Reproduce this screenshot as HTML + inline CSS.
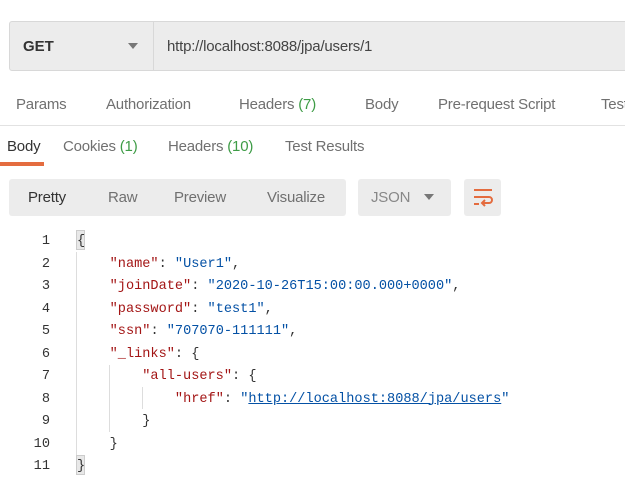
<!DOCTYPE html>
<html><head><style>
*{margin:0;padding:0;box-sizing:border-box}
body{width:625px;height:500px;background:#fff;font-family:"Liberation Sans",sans-serif;position:relative;overflow:hidden;color:#505050}
.abs{position:absolute;white-space:nowrap}
.url{left:9px;top:21px;width:640px;height:50px;background:#ececec;border:1px solid #d8d8d8;border-radius:3px}
.sep{left:153px;top:22px;width:1px;height:48px;background:#d8d8d8}
.t{font-size:15px;color:#707070;letter-spacing:-0.2px}
.g{color:#3e9c46}
.btn{background:#ececec;border-radius:3px;height:37px;top:179px}
.code{font-family:"Liberation Mono",monospace;font-size:13.6px;white-space:pre}
.ln{width:50px;text-align:right;color:#333;font-size:13.6px;font-family:"Liberation Mono",monospace}
.k{color:#a31515}.s{color:#0451a5}
</style></head><body>
<div class="abs url"></div>
<div class="abs sep"></div>
<div class="abs" style="left:23px;top:38px;font-size:15px;color:#333;font-weight:bold">GET</div>
<svg class="abs" style="left:128px;top:43px" width="10" height="6"><path d="M0 0H10L5 6Z" fill="#777"/></svg>
<div class="abs" style="left:167px;top:38px;font-size:15px;color:#444;letter-spacing:-0.2px">http://localhost:8088/jpa/users/1</div>

<div class="abs t" style="left:16px;top:96px">Params</div>
<div class="abs t" style="left:106px;top:96px">Authorization</div>
<div class="abs t" style="left:239px;top:96px">Headers <span class="g">(7)</span></div>
<div class="abs t" style="left:365px;top:96px">Body</div>
<div class="abs t" style="left:438px;top:96px">Pre-request Script</div>
<div class="abs t" style="left:601px;top:96px">Test</div>
<div class="abs" style="left:0;top:125px;width:625px;height:1px;background:#e2e2e2"></div>

<div class="abs t" style="left:7px;top:138px;color:#333">Body</div>
<div class="abs t" style="left:63px;top:138px">Cookies <span class="g">(1)</span></div>
<div class="abs t" style="left:168px;top:138px">Headers <span class="g">(10)</span></div>
<div class="abs t" style="left:285px;top:138px">Test Results</div>
<div class="abs" style="left:0;top:162px;width:44px;height:4px;background:#e46c3f"></div>

<div class="abs btn" style="left:9px;width:337px"></div>
<div class="abs t" style="left:28px;top:189px;color:#333">Pretty</div>
<div class="abs t" style="left:108px;top:189px">Raw</div>
<div class="abs t" style="left:174px;top:189px">Preview</div>
<div class="abs t" style="left:267px;top:189px">Visualize</div>
<div class="abs btn" style="left:358px;width:93px"></div>
<div class="abs t" style="left:371px;top:189px;color:#888">JSON</div>
<svg class="abs" style="left:424px;top:194px" width="10" height="6"><path d="M0 0H10L5 6Z" fill="#777"/></svg>
<div class="abs btn" style="left:464px;width:37px"></div>
<svg class="abs" style="left:471px;top:185px" width="24" height="24"><path d="M3 5H21M3 12H18a3 3 0 0 1 0 6H12M3 19H8M14 15L11 18L14 21" stroke="#e46c3f" stroke-width="2" fill="none"/></svg>

<div class="abs" style="left:76px;top:252px;width:1px;height:205px;background:#ddd"></div>
<div class="abs" style="left:109px;top:365px;width:1px;height:67px;background:#ddd"></div>
<div class="abs" style="left:142px;top:387px;width:1px;height:22px;background:#ddd"></div>
<div class="abs" style="left:76px;top:230px;width:9px;height:20px;background:#e8e8e8;border:1px solid #ccc"></div>
<div class="abs" style="left:76px;top:455px;width:9px;height:20px;background:#e8e8e8;border:1px solid #ccc"></div>

<div class="abs" style="left:0;top:231px;line-height:22.5px">
<div class="ln">1</div><div class="ln">2</div><div class="ln">3</div><div class="ln">4</div><div class="ln">5</div><div class="ln">6</div><div class="ln">7</div><div class="ln">8</div><div class="ln">9</div><div class="ln">10</div><div class="ln">11</div>
</div>
<pre class="abs code" style="left:77px;top:231px;line-height:22.5px;color:#333">{
    <span class="k">"name"</span>: <span class="s">"User1"</span>,
    <span class="k">"joinDate"</span>: <span class="s">"2020-10-26T15:00:00.000+0000"</span>,
    <span class="k">"password"</span>: <span class="s">"test1"</span>,
    <span class="k">"ssn"</span>: <span class="s">"707070-111111"</span>,
    <span class="k">"_links"</span>: {
        <span class="k">"all-users"</span>: {
            <span class="k">"href"</span>: <span class="s">"<u>http://localhost:8088/jpa/users</u>"</span>
        }
    }
}</pre>
</body></html>
